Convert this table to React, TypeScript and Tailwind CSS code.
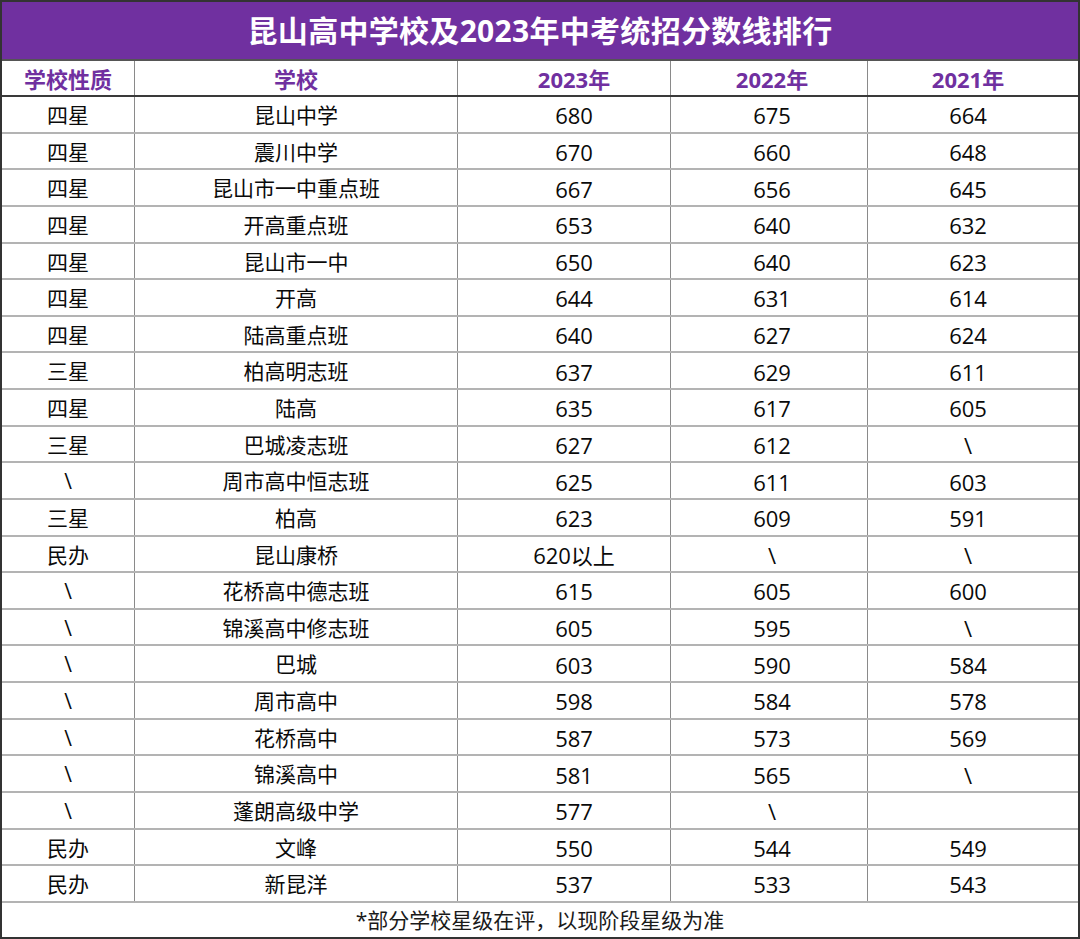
const rows: [string, string, string, string, string][] = [
  ["四星", "昆山中学", "680", "675", "664"],
  ["四星", "震川中学", "670", "660", "648"],
  ["四星", "昆山市一中重点班", "667", "656", "645"],
  ["四星", "开高重点班", "653", "640", "632"],
  ["四星", "昆山市一中", "650", "640", "623"],
  ["四星", "开高", "644", "631", "614"],
  ["四星", "陆高重点班", "640", "627", "624"],
  ["三星", "柏高明志班", "637", "629", "611"],
  ["四星", "陆高", "635", "617", "605"],
  ["三星", "巴城凌志班", "627", "612", "\\"],
  ["\\", "周市高中恒志班", "625", "611", "603"],
  ["三星", "柏高", "623", "609", "591"],
  ["民办", "昆山康桥", "620以上", "\\", "\\"],
  ["\\", "花桥高中德志班", "615", "605", "600"],
  ["\\", "锦溪高中修志班", "605", "595", "\\"],
  ["\\", "巴城", "603", "590", "584"],
  ["\\", "周市高中", "598", "584", "578"],
  ["\\", "花桥高中", "587", "573", "569"],
  ["\\", "锦溪高中", "581", "565", "\\"],
  ["\\", "蓬朗高级中学", "577", "\\", ""],
  ["民办", "文峰", "550", "544", "549"],
  ["民办", "新昆洋", "537", "533", "543"],
];

const headers = ["学校性质", "学校", "2023年", "2022年", "2021年"];
const widths = ["w-[133px]", "w-[323px]", "w-[213px]", "w-[197px]", "w-[214px]"];
const pads = ["", "", "pl-[20px]", "pl-[6px]", "pr-[14px]"];
const sizes = ["text-[21px]", "text-[21px]", "text-[22px]", "text-[22px]", "text-[22px]"];

export default function App() {
  return (
    <div
      className="w-[1080px] h-[939px] bg-white overflow-hidden"
      style={{ fontFamily: '"Open Sans", "Noto Sans CJK SC", sans-serif' }}
    >
      <div className="h-full border-2 border-[#333] flex flex-col">
        <div className="h-[59px] bg-[#7030a0] border-b-2 border-[#555] flex items-center justify-center text-white font-bold text-[30px] tracking-[0.3px]">
          昆山高中学校及2023年中考统招分数线排行
        </div>
        <div className="flex h-[36px] border-b-2 border-[#3a3a3a]">
          {headers.map((h, i) => (
            <div
              key={h}
              className={`${widths[i]} ${pads[i]} shrink-0 flex items-center justify-center pt-[2px] text-[22px] font-bold text-[#7030a0] ${
                i < 4 ? "border-r border-[#8a8a8a]" : ""
              }`}
            >
              {h}
            </div>
          ))}
        </div>
        {rows.map((r, ri) => (
          <div
            key={ri}
            className="flex h-[36.64px] border-b-2 border-[#b3b3b3]"
          >
            {r.map((c, i) => (
              <div
                key={i}
                className={`${widths[i]} ${pads[i]} ${sizes[i]} shrink-0 flex items-center justify-center pt-[3px] text-[#0a0a0a] ${
                  i < 4 ? "border-r border-[#8a8a8a]" : ""
                }`}
              >
                {c}
              </div>
            ))}
          </div>
        ))}
        <div className="flex-1 flex items-center justify-center pt-[2px] text-[21px] text-[#1a1a1a]">
          *部分学校星级在评，以现阶段星级为准
        </div>
      </div>
    </div>
  );
}
